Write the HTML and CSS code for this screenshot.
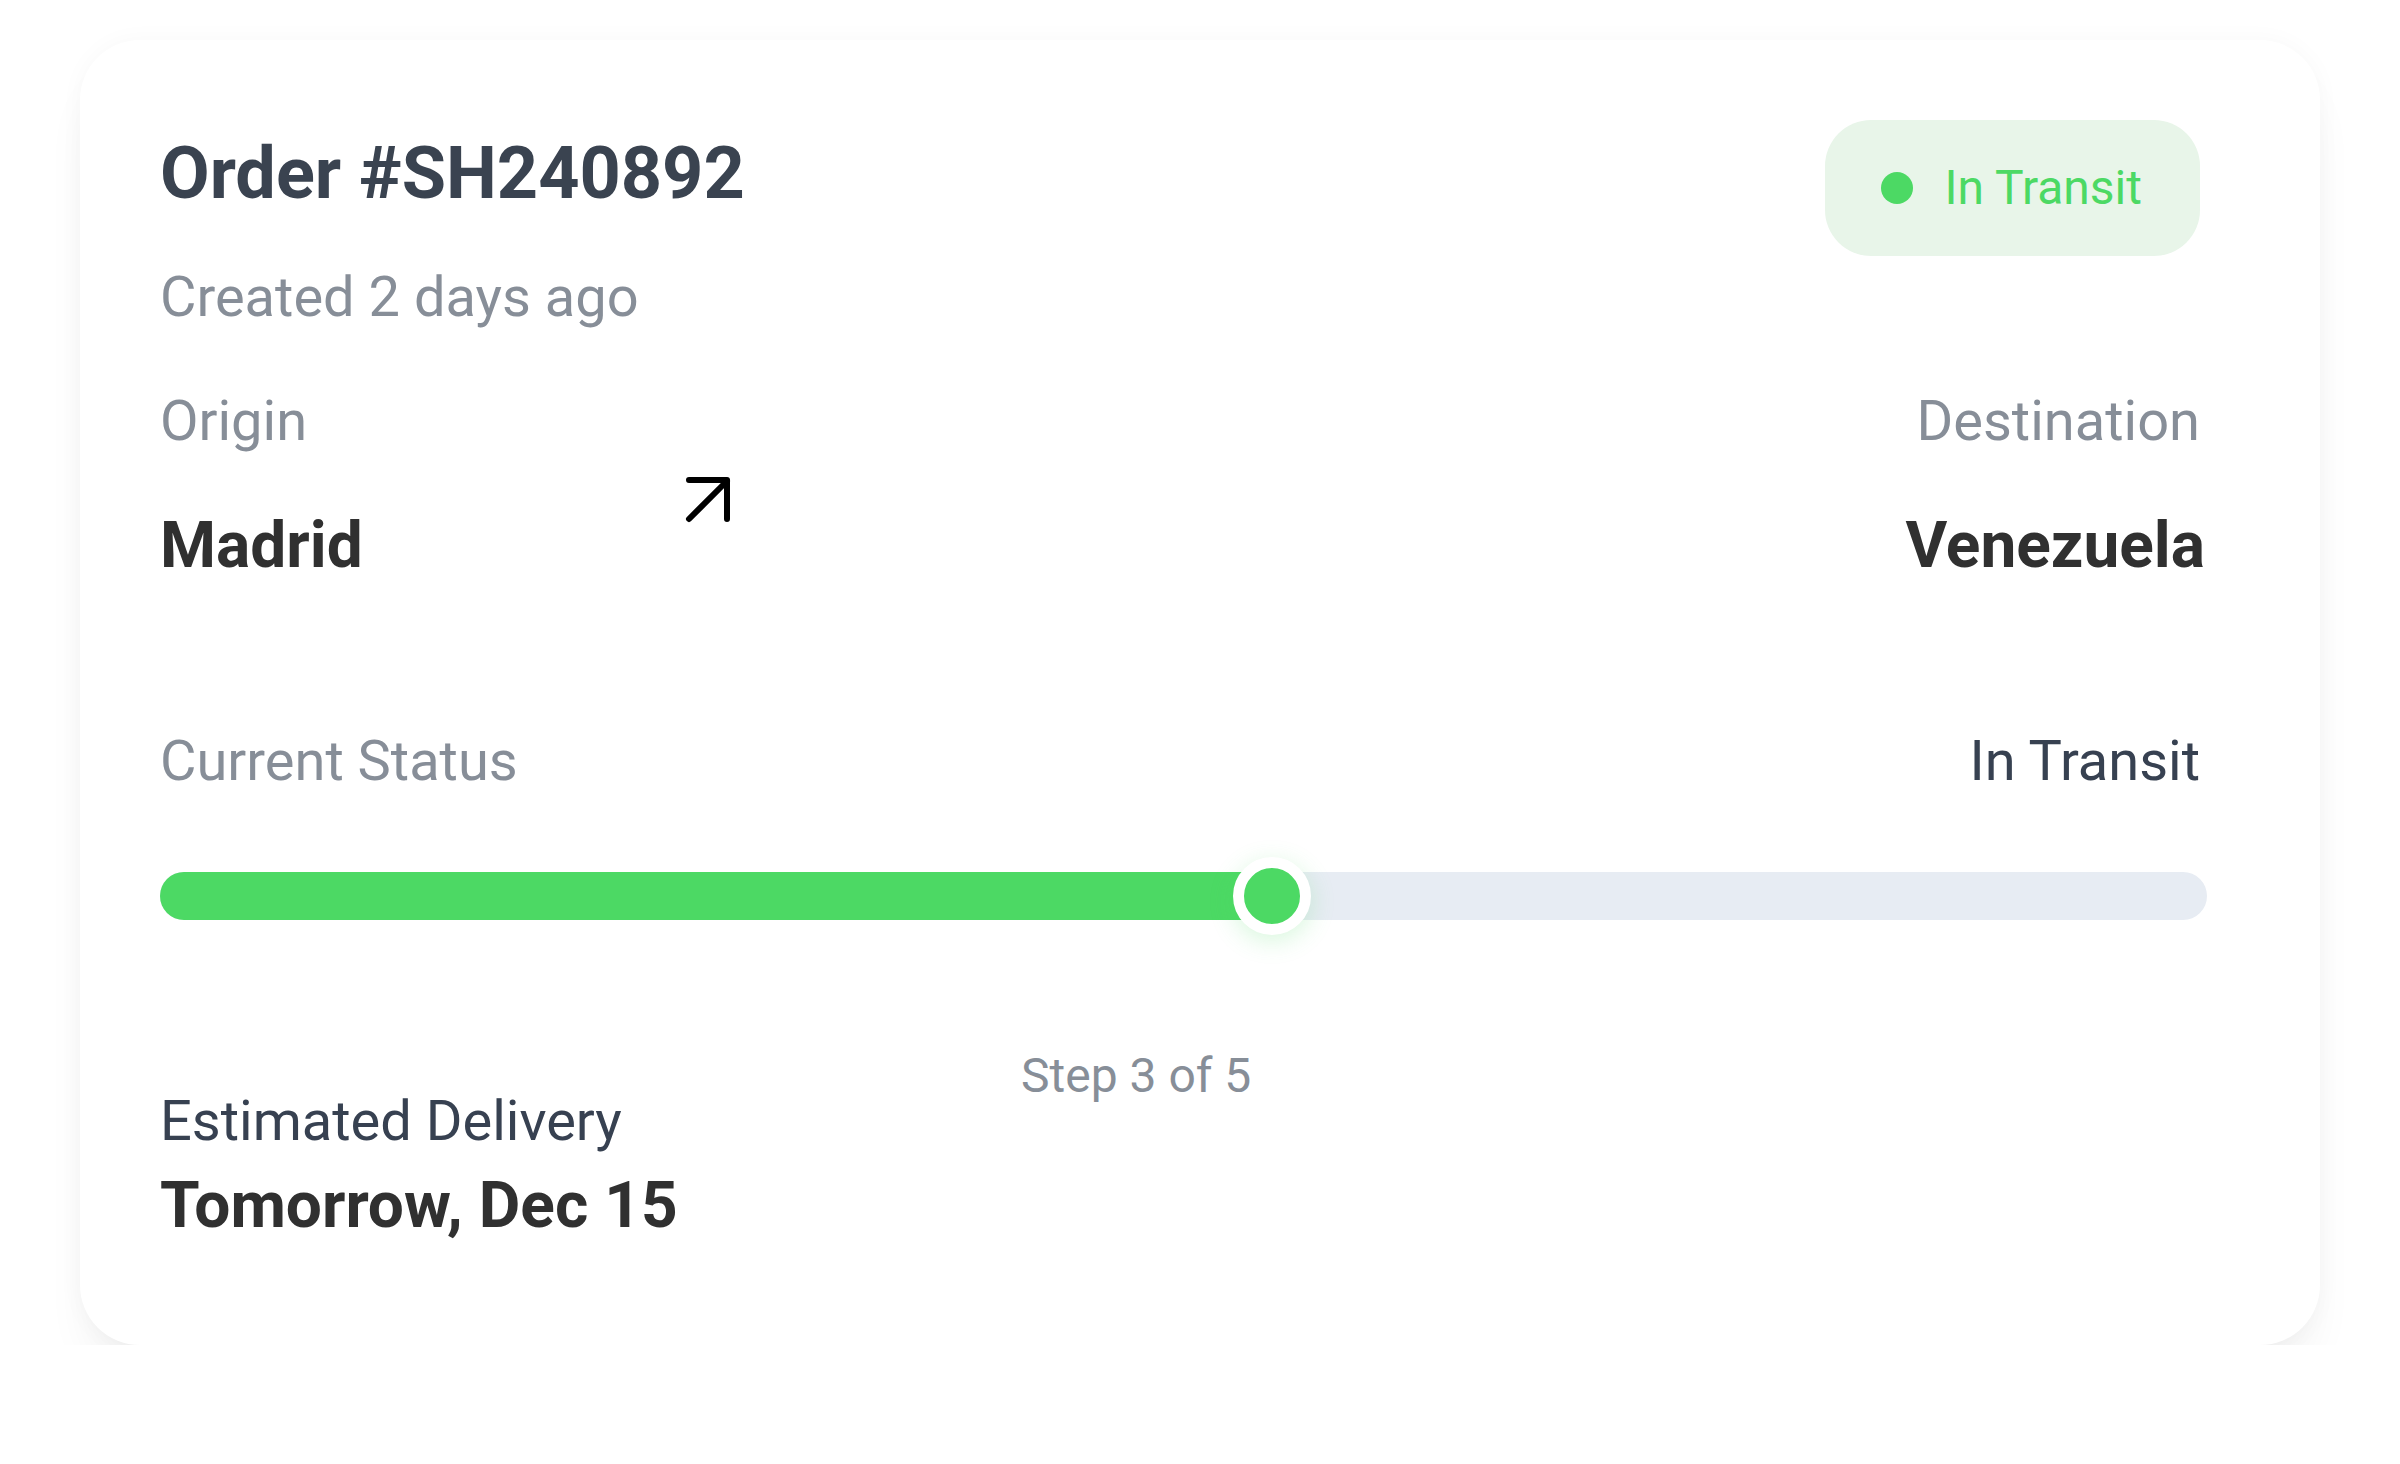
FILE: index.html
```html
<!DOCTYPE html>
<html lang="en">
<head>
<meta charset="utf-8">
<title>Order #SH240892</title>
<link rel="stylesheet" href="styles.css">
</head>
<body>
<div class="card">
  <div class="header">
    <div class="heading">
      <h1 class="title">Order #SH240892</h1>
      <p class="subtitle">Created 2 days ago</p>
    </div>
    <div class="badge"><span class="badge-dot"></span><span class="badge-text">In Transit</span></div>
  </div>

  <div class="route">
    <div class="route-left">
      <div class="place">
        <div class="label">Origin</div>
        <div class="value">Madrid</div>
      </div>
      <svg class="route-arrow" width="56" height="56" viewBox="0 0 56 56" fill="none" stroke="#000" stroke-width="6" stroke-linecap="round" stroke-linejoin="round">
        <path d="M9 8 H47 V47"/>
        <path d="M9 47 L47 9"/>
      </svg>
    </div>
    <div class="place place-right">
      <div class="label">Destination</div>
      <div class="value">Venezuela</div>
    </div>
  </div>

  <div class="status-row">
    <span class="label">Current Status</span>
    <span class="status-value">In Transit</span>
  </div>

  <div class="track">
    <div class="fill" style="width:54.32%"></div>
    <div class="thumb" style="left:54.32%"></div>
  </div>

  <div class="bottom">
    <div class="delivery">
      <div class="delivery-label">Estimated Delivery</div>
      <div class="delivery-value">Tomorrow, Dec 15</div>
    </div>
    <div class="step">Step 3 of 5</div>
  </div>
</div>
</body>
</html>
```

FILE: styles.css
```css
* { box-sizing: border-box; }

html, body {
  margin: 0;
  padding: 0;
  background: #ffffff;
}

body {
  font-family: Roboto, "Liberation Sans", Arial, sans-serif;
  color: #374151;
}

.card {
  margin: 40px 0 0 80px;
  width: 2240px;
  padding: 80px 120px 100px 80px;
  background: #ffffff;
  border-radius: 60px;
  box-shadow: 0 34px 50px -14px rgba(0, 0, 0, 0.07), 0 0 24px rgba(0, 0, 0, 0.03);
}

.header {
  display: flex;
  justify-content: space-between;
  align-items: flex-start;
}

.title {
  margin: 0;
  font-size: 72px;
  line-height: 108px;
  font-weight: 700;
  color: #3a4350;
}

.subtitle {
  margin: 27px 0 0;
  font-size: 56px;
  line-height: 84px;
  color: #878e98;
}

.badge {
  display: flex;
  align-items: center;
  gap: 31px;
  height: 136px;
  padding: 0 58px 0 56px;
  border-radius: 46px;
  background: #e8f5e9;
}

.badge-dot {
  width: 32px;
  height: 32px;
  border-radius: 50%;
  background: #4cd964;
}

.badge-text {
  font-size: 48px;
  line-height: 72px;
  color: #4cd964;
}

.route {
  margin-top: 40px;
  display: flex;
  justify-content: space-between;
  align-items: flex-start;
}

.route-left {
  display: flex;
  align-items: flex-start;
}

.place {
  width: 520px;
}

.place-right {
  width: auto;
  text-align: right;
}

.label {
  font-size: 56px;
  line-height: 84px;
  color: #878e98;
}

.value {
  margin-top: 35px;
  font-size: 64px;
  line-height: 96px;
  font-weight: 700;
  color: #303030;
}

.place-right .value {
  margin-right: -5px;
}

.route-arrow {
  margin-top: 93px;
  display: block;
}

.status-row {
  margin-top: 125px;
  display: flex;
  justify-content: space-between;
  align-items: baseline;
}

.status-value {
  font-size: 56px;
  line-height: 84px;
  color: #374151;
}

.track {
  position: relative;
  margin-top: 69px;
  margin-right: -7px;
  height: 48px;
  border-radius: 24px;
  background: #e7ecf3;
}

.fill {
  height: 100%;
  border-radius: 24px;
  background: #4cd964;
}

.thumb {
  position: absolute;
  top: 50%;
  width: 78px;
  height: 78px;
  border-radius: 50%;
  background: #4cd964;
  border: 11px solid #ffffff;
  transform: translate(-50%, -50%);
  box-shadow: 0 6px 24px rgba(76, 217, 100, 0.22);
}

.bottom {
  margin-top: 120px;
  display: flex;
  align-items: flex-start;
}

.delivery {
  width: 861px;
  margin-top: 39px;
}

.delivery-label {
  font-size: 56px;
  line-height: 84px;
  color: #374151;
}

.delivery-value {
  margin-top: 5px;
  font-size: 64px;
  line-height: 76.8px;
  font-weight: 700;
  color: #303030;
}

.step {
  font-size: 48px;
  line-height: 72px;
  color: #878e98;
}
```
